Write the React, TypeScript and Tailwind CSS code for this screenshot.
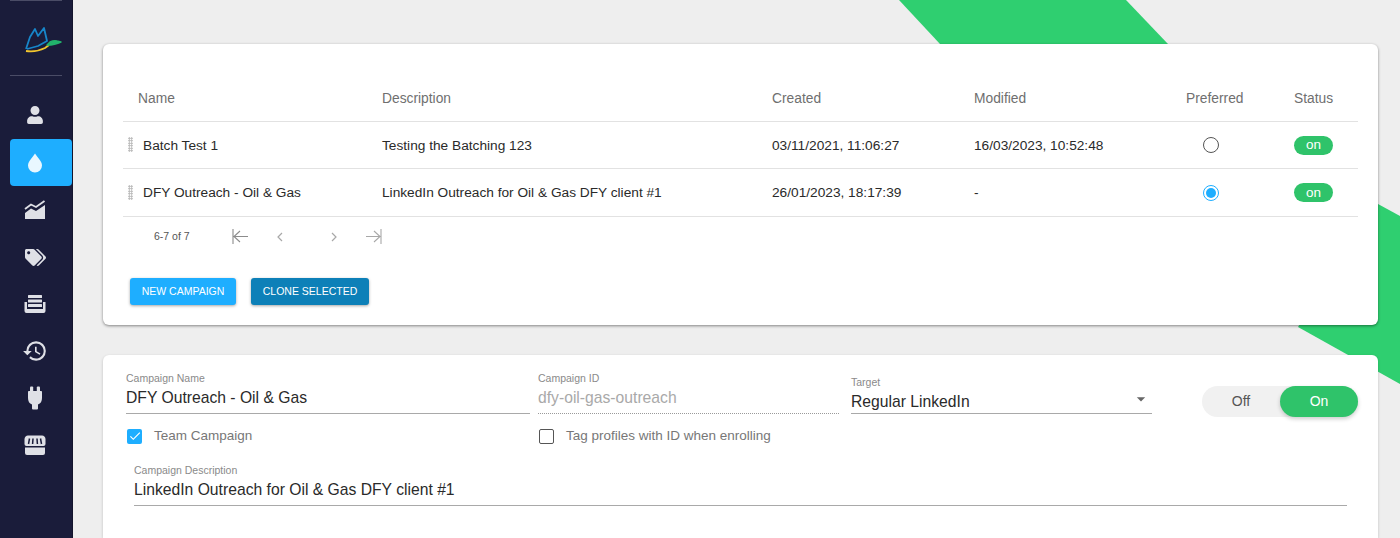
import { FaUser, FaTags } from "react-icons/fa";
import { MdHistory, MdCheck, MdArrowDropDown } from "react-icons/md";

const rows = [
  { name: "Batch Test 1", desc: "Testing the Batching 123", created: "03/11/2021, 11:06:27", modified: "16/03/2023, 10:52:48", preferred: false },
  { name: "DFY Outreach - Oil & Gas", desc: "LinkedIn Outreach for Oil & Gas DFY client #1", created: "26/01/2023, 18:17:39", modified: "-", preferred: true },
];

const gridCols = "grid grid-cols-[259px_390px_202px_212px_108px_64px]";

function Logo() {
  return (
    <svg width="38" height="26" viewBox="0 0 38 26" fill="none" strokeWidth="1.8" strokeLinejoin="round">
      <path d="M2 22 L6 10 L11 2 L14 9 L20 1 L23 14 L14 19 L3 22" stroke="#1786c9" />
      <path d="M2 24 Q12 25.5 21 21 L25 18" stroke="#f3c62e" />
      <path d="M23 18 L26 15 Q30 13 33 14 L37 15 Q31 18 23 18 Z" stroke="#22b36c" fill="#22b36c" strokeWidth="1.4" />
    </svg>
  );
}

function DropIcon() {
  return (
    <svg width="16" height="20" viewBox="0 0 16 20" fill="#e9f7ff">
      <path d="M8 0.5 C10 4 15 8 15 12.5 A7 7 0 0 1 1 12.5 C1 8 6 4 8 0.5 Z" />
    </svg>
  );
}

function AreaIcon() {
  return (
    <svg width="22" height="20" viewBox="0 0 22 20" fill="none">
      <path d="M1 9 L7 4.5 L12 7 L20.5 1" stroke="#dfe0e6" strokeWidth="1.8" />
      <path d="M1 13 L7 8.5 L12 11 L21 5 V19 H1 Z" fill="#dfe0e6" />
    </svg>
  );
}

function PlugIcon() {
  return (
    <svg width="16" height="24" viewBox="0 0 16 24" fill="#dfe0e6">
      <rect x="3" y="0.5" width="3.2" height="6" rx="1" />
      <rect x="9.8" y="0.5" width="3.2" height="6" rx="1" />
      <path d="M1 5.5 Q1 5 2 5 H14 Q15 5 15 5.5 V12 Q15 17 11 18.5 V22.5 Q11 23.5 10 23.5 H6 Q5 23.5 5 22.5 V18.5 Q1 17 1 12 Z" />
    </svg>
  );
}

function StackIcon() {
  return (
    <svg width="22" height="20" viewBox="0 0 22 20" fill="#dfe0e6">
      <rect x="4" y="1" width="14" height="3" rx="0.5" />
      <rect x="4" y="5.5" width="14" height="3" rx="0.5" />
      <rect x="4" y="10" width="14" height="3" rx="0.5" />
      <path d="M0.5 8 H3 V15 H19 V8 H21.5 V17 Q21.5 19 19.5 19 H2.5 Q0.5 19 0.5 17 Z" />
    </svg>
  );
}

function StoreIcon() {
  return (
    <svg width="22" height="21" viewBox="0 0 22 21" fill="#dfe0e6">
      <path d="M4 0.5 H18 Q21 0.5 21.5 4 V9 Q21.5 11 19.5 11 H2.5 Q0.5 11 0.5 9 V4 Q1 0.5 4 0.5 Z" />
      <path d="M5.5 3.5 L4.5 9 M9 3.5 L8.6 9 M13 3.5 L13.4 9 M16.5 3.5 L17.5 9" stroke="#1a1c3a" strokeWidth="1.5" />
      <path d="M1 12.5 H21 V18 Q21 20 19 20 H3 Q1 20 1 18 Z" />
    </svg>
  );
}

function PagerEdge({ flip, color }: { flip?: boolean; color: string }) {
  return (
    <svg width="17" height="17" viewBox="0 0 17 17" fill="none" stroke={color} strokeWidth="1.1" className={flip ? "-scale-x-100" : ""}>
      <path d="M1 1 V16 M2 8.5 H16 M8 3 L2 8.5 L8 14" />
    </svg>
  );
}

function PagerChevron({ flip }: { flip?: boolean }) {
  return (
    <svg width="8" height="10" viewBox="0 0 8 10" fill="none" stroke="#a8a8a8" strokeWidth="1.2" className={flip ? "-scale-x-100" : ""}>
      <path d="M6 1 L2 5 L6 9" />
    </svg>
  );
}

function Sidebar() {
  const icon = "h-[46px] pr-[12px] flex items-center justify-center text-[#dfe0e6]";
  return (
    <aside className="relative z-10 w-[73px] h-[538px] shrink-0 bg-[#1a1c3a] border-r border-[#14152c] flex flex-col items-stretch">
      <div className="h-px mx-[10px] bg-[#4a4c66]" />
      <div className="h-[75px] mx-[10px] border-b border-[#4a4c66] flex items-center pl-[14px] pt-[3px]">
        <Logo />
      </div>
      <nav className="mt-[16px] pl-[10px] flex flex-col gap-[1px]">
        <div className={icon}><FaUser size={18} /></div>
        <div className="h-[47px] pr-[12px] rounded-[4px] bg-[#1eaeff] flex items-center justify-center"><DropIcon /></div>
        <div className={icon}><AreaIcon /></div>
        <div className={icon}><FaTags size={21} /></div>
        <div className={icon}><StackIcon /></div>
        <div className={icon}><MdHistory size={26} /></div>
        <div className={icon}><PlugIcon /></div>
        <div className={icon}><StoreIcon /></div>
      </nav>
    </aside>
  );
}

function CampaignTable() {
  const cell = "pt-[2px]";
  return (
    <section className="relative bg-white rounded-[6px] h-[281px] shadow-[0_1px_3px_rgba(0,0,0,0.45)] px-[20px] pt-[31px]">
      <div className={`${gridCols} h-[47px] items-center border-b border-[#e2e2e2] text-[13.8px] text-[#6f6f6f]`}>
        <span className="pl-[15px] pt-[2px]">Name</span>
        <span className={cell}>Description</span>
        <span className={cell}>Created</span>
        <span className={cell}>Modified</span>
        <span className={cell}>Preferred</span>
        <span className={cell}>Status</span>
      </div>
      {rows.map((r, i) => (
        <div key={r.name} className={`${gridCols} ${i === 0 ? "h-[47px]" : "h-[48px]"} items-center border-b border-[#e2e2e2] text-[13.7px] text-[#2a2a2a]`}>
          <div className="flex items-center pl-[5px]">
            <span className="w-[5px] h-[15px] mr-[10px] bg-[radial-gradient(#b5b5b5_1px,transparent_1px)] bg-[length:2.5px_2.5px]" />
            <span className={cell}>{r.name}</span>
          </div>
          <span className={cell}>{r.desc}</span>
          <span className={cell}>{r.created}</span>
          <span className={cell}>{r.modified}</span>
          <div className="pl-[17px]">
            {r.preferred ? (
              <span className="w-4 h-4 rounded-full border border-[#1eaeff] flex items-center justify-center">
                <span className="w-[10px] h-[10px] rounded-full bg-[#1eaeff]" />
              </span>
            ) : (
              <span className="block w-4 h-4 rounded-full border-[1.5px] border-[#555]" />
            )}
          </div>
          <span className="w-[39px] h-[19px] pt-[1px] rounded-full bg-[#2fc36a] text-white text-[13.5px] flex items-center justify-center">on</span>
        </div>
      ))}
      <div className="flex items-center h-[39px]">
        <span className="w-[109px] pl-[31px] text-[10.5px] text-[#555]">6-7 of 7</span>
        <div className="w-[44px]"><PagerEdge color="#8c8c8c" /></div>
        <div className="w-[54px]"><PagerChevron /></div>
        <div className="w-[35px]"><PagerChevron flip /></div>
        <PagerEdge flip color="#a8a8a8" />
      </div>
      <div className="flex gap-[15px] mt-[22px] pl-[7px]">
        <button className="w-[106px] h-[27px] rounded-[3px] bg-[#1eaeff] text-white text-[10.5px] shadow-[0_1px_3px_rgba(0,0,0,0.35)]">NEW CAMPAIGN</button>
        <button className="w-[118px] h-[27px] rounded-[3px] bg-[#0d80b8] text-white text-[10.5px] shadow-[0_1px_3px_rgba(0,0,0,0.35)]">CLONE SELECTED</button>
      </div>
    </section>
  );
}

function Field({ label, value, className, muted, dotted }: { label: string; value: string; className: string; muted?: boolean; dotted?: boolean }) {
  return (
    <div className={className}>
      <div className="text-[10.5px] leading-[12px] text-[#8a8a8a]">{label}</div>
      <div className={`h-[30px] leading-[27px] text-[15.7px] ${muted ? "text-[#a9a9a9]" : "text-[#2a2a2a]"} border-b ${dotted ? "border-dotted border-[#9a9a9a]" : "border-[#a9a9a9]"}`}>
        {value}
      </div>
    </div>
  );
}

function CampaignForm() {
  return (
    <section className="relative bg-white rounded-t-[6px] h-[183px] mt-[30px] shadow-[0_1px_3px_rgba(0,0,0,0.2)] pt-[17px] pl-[23px] pr-[20px]">
      <div className="flex items-start">
        <Field label="Campaign Name" value="DFY Outreach - Oil & Gas" className="w-[404px] mr-[8px]" />
        <Field label="Campaign ID" value="dfy-oil-gas-outreach" className="w-[301px] mr-[12px]" muted dotted />
        <div className="w-[301px] mr-[50px] pt-[4px]">
          <div className="text-[10.5px] leading-[12px] text-[#8a8a8a]">Target</div>
          <div className="h-[26px] leading-[26px] text-[15.7px] text-[#2a2a2a] border-b border-[#a9a9a9] flex items-center justify-between">
            <span className="mt-[3px]">Regular LinkedIn</span>
            <MdArrowDropDown size={20} className="text-[#666] mr-[1px] -mt-[3px]" />
          </div>
        </div>
        <div className="w-[156px] h-[31px] mt-[14px] rounded-full bg-[#f1f1f1] flex items-center text-[14px]">
          <span className="w-[78px] text-center text-[#555]">Off</span>
          <span className="w-[78px] h-[31px] leading-[31px] text-center rounded-full bg-[#2fc36a] text-white shadow-[0_2px_4px_rgba(0,0,0,0.2)]">On</span>
        </div>
      </div>
      <div className="flex items-center mt-[9px] h-[20px] text-[13.5px] text-[#777]">
        <div className="w-[412px] flex items-center">
          <span className="w-[15px] h-[15px] ml-[1px] rounded-[2px] bg-[#1eaeff] text-white flex items-center justify-center"><MdCheck size={14} /></span>
          <span className="ml-[12px]">Team Campaign</span>
        </div>
        <span className="w-[15px] h-[15px] ml-[1px] rounded-[2px] border-[1.5px] border-[#555]" />
        <span className="ml-[12px]">Tag profiles with ID when enrolling</span>
      </div>
      <Field label="Campaign Description" value="LinkedIn Outreach for Oil & Gas DFY client #1" className="ml-[8px] mr-[11px] mt-[18px]" />
    </section>
  );
}

export default function App() {
  return (
    <div className="relative w-[1400px] h-[538px] overflow-hidden bg-[#eeeeee] flex font-['Liberation_Sans',Arial,sans-serif]">
      <Sidebar />
      {/* green background bands */}
      <svg className="absolute left-0 top-0" width="1400" height="538" viewBox="0 0 1400 538">
        <polygon points="899,0 1126,0 1168,44 940,44" fill="#2fcf70" />
        <polygon points="1378,204 1400,216 1400,384 1298,327" fill="#2fcf70" />
      </svg>
      <main className="relative flex-1 pl-[30px] pr-[23px] pt-[44px]">
        <CampaignTable />
        <CampaignForm />
      </main>
    </div>
  );
}
